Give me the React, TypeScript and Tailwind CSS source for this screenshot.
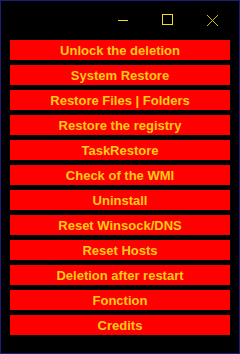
import React from "react";

const items = [
  "Unlock the deletion",
  "System Restore",
  "Restore Files | Folders",
  "Restore the registry",
  "TaskRestore",
  "Check of the WMI",
  "Uninstall",
  "Reset Winsock/DNS",
  "Reset Hosts",
  "Deletion after restart",
  "Fonction",
  "Credits",
];

export default function App() {
  return (
    <div className="w-[240px] h-[354px] bg-black border border-[#1d1d7a] flex flex-col" style={{ fontFamily: '"Liberation Sans", Arial, sans-serif' }}>
      <div className="h-[39px] relative">
        <svg className="absolute left-[116px] top-[13px]" width="12" height="12" viewBox="0 0 12 12">
          <line x1="1" y1="6.5" x2="11" y2="6.5" stroke="#f0e020" strokeWidth="1" />
        </svg>
        <svg className="absolute left-[160px] top-[13px]" width="12" height="12" viewBox="0 0 12 12">
          <rect x="1.5" y="0.5" width="10" height="10" fill="none" stroke="#f0e020" strokeWidth="1" />
        </svg>
        <svg className="absolute left-[205px] top-[13px]" width="13" height="13" viewBox="0 0 13 13">
          <line x1="1" y1="1" x2="12" y2="12" stroke="#c8c020" strokeWidth="1" />
          <line x1="12" y1="1" x2="1" y2="12" stroke="#c8c020" strokeWidth="1" />
        </svg>
      </div>
      <div className="flex flex-col gap-[5px] px-[9px]">
        {items.map((t) => (
          <div key={t} className="h-[20px] w-[220px] bg-[#ff0000] flex items-center justify-center text-[13px] font-bold text-[#ffcc14] leading-none">
            {t}
          </div>
        ))}
      </div>
    </div>
  );
}
